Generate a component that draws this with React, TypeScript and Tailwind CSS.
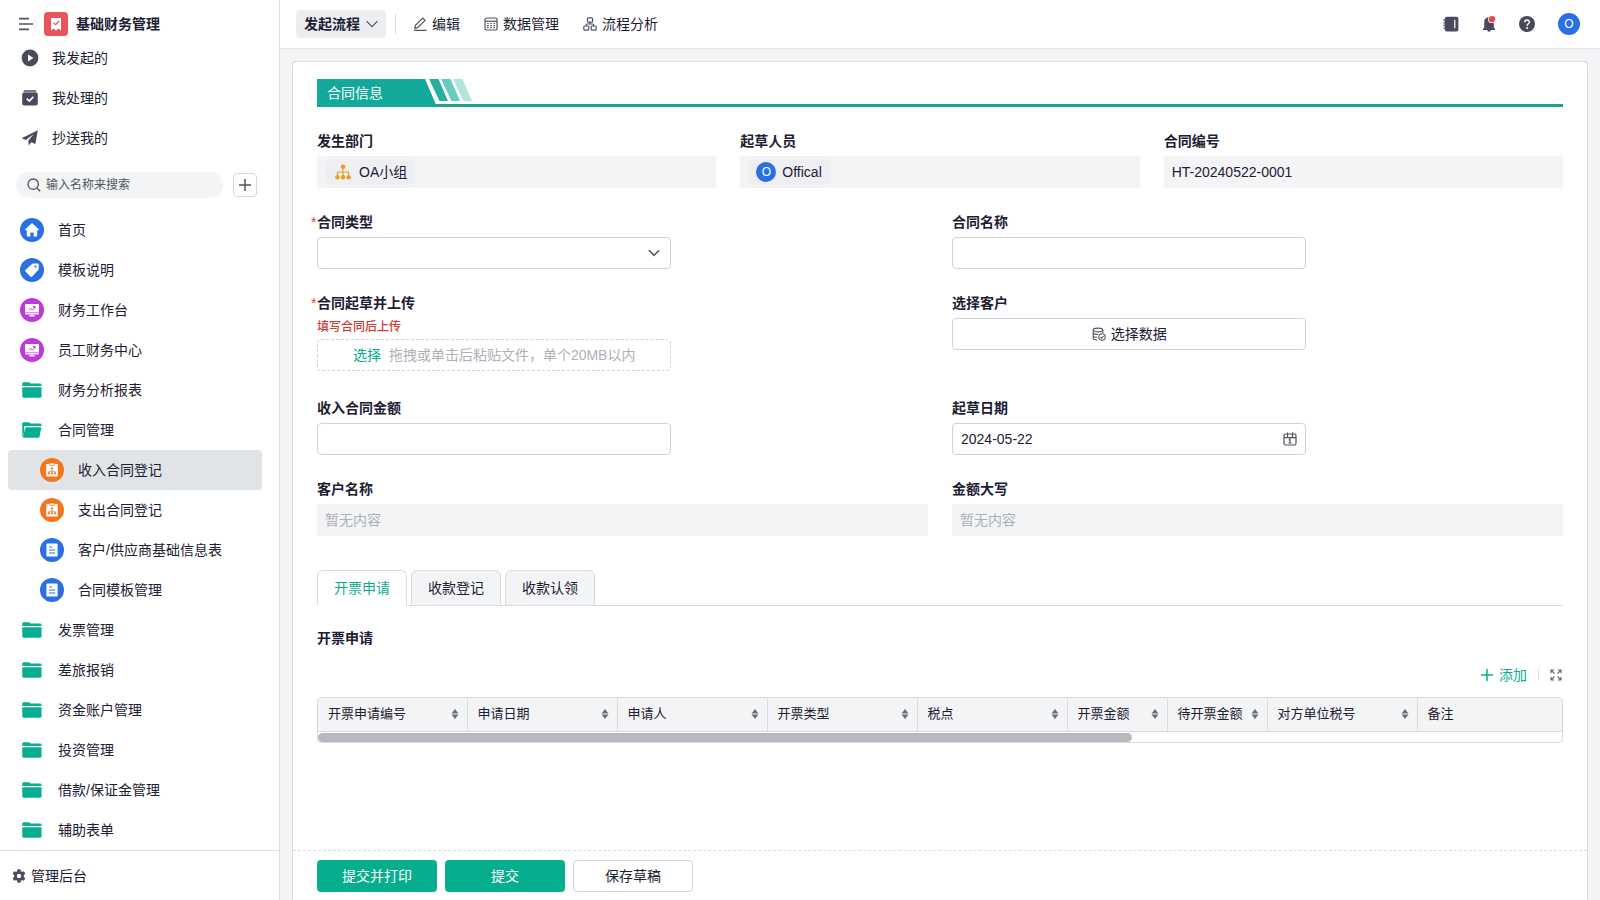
import { useState } from 'react';
import type { ReactNode } from 'react';

const topLinks = [
  { icon: 'play', label: '我发起的' },
  { icon: 'done', label: '我处理的' },
  { icon: 'send', label: '抄送我的' }
];

const menuItems = [
  { icon: 'home', label: '首页' },
  { icon: 'tag', label: '模板说明' },
  { icon: 'board', label: '财务工作台' },
  { icon: 'board', label: '员工财务中心' },
  { icon: 'folder', label: '财务分析报表' },
  { icon: 'folderOpen', label: '合同管理' },
  { icon: 'flow', label: '收入合同登记', child: true, active: true },
  { icon: 'flow', label: '支出合同登记', child: true },
  { icon: 'doc', label: '客户/供应商基础信息表', child: true },
  { icon: 'doc', label: '合同模板管理', child: true },
  { icon: 'folder', label: '发票管理' },
  { icon: 'folder', label: '差旅报销' },
  { icon: 'folder', label: '资金账户管理' },
  { icon: 'folder', label: '投资管理' },
  { icon: 'folder', label: '借款/保证金管理' },
  { icon: 'folder', label: '辅助表单' }
];

const columns = [
  { label: '开票申请编号', width: 'w-[149px]' },
  { label: '申请日期', width: 'w-[150px]' },
  { label: '申请人', width: 'w-[150px]' },
  { label: '开票类型', width: 'w-[150px]' },
  { label: '税点', width: 'w-[150px]' },
  { label: '开票金额', width: 'w-[100px]' },
  { label: '待开票金额', width: 'w-[100px]' },
  { label: '对方单位税号', width: 'w-[150px]' },
  { label: '备注', width: '' }
];

const tabs = ['开票申请', '收款登记', '收款认领'];

function TopLinkIcon({ name }: { name: string }) {
  return (
    <svg viewBox="0 0 18 18" className="h-[18px] w-[18px] shrink-0" fill="#474b5c">
      {name === 'play' && (
        <>
          <circle cx="9" cy="9" r="8.4" />
          <path d="M7 5.4v7.2L12.4 9z" fill="#fff" />
        </>
      )}
      {name === 'done' && (
        <>
          <path d="M4 1h10a1.500 1.500 0 0 1 1.500 1.500V3.200h-13V2.500A1.500 1.500 0 0 1 4 1z" opacity=".75" />
          <rect x="1.200" y="3.600" width="15.600" height="13" rx="2" />
          <path d="M5.800 9.600l2.500 2.500 4-4.200" fill="none" stroke="#fff" strokeWidth="1.700" />
        </>
      )}
      {name === 'send' && <path d="M16.8 1.2L.6 9.2l4.2 1.7 8-6-5.6 6.8.7 4.8 2.2-3.2 4.3 1.7z" />}
    </svg>
  );
}

function MenuIcon({ name }: { name: string }) {
  if (name === 'folder' || name === 'folderOpen') {
    return (
      <svg viewBox="0 0 24 24" className="h-6 w-6 shrink-0" fill="#07ae8e">
        <path d="M2.300 8V5.600c0-.8.600-1.400 1.400-1.400h5.400l1.600 1.400h9.200c.9 0 1.600.6 1.600 1.400v1z" />
        {name === 'folder' ? (
          <path d="M2.300 9.200h19.200v9c0 .9-.6 1.500-1.400 1.500H3.700c-.8 0-1.400-.6-1.400-1.500z" />
        ) : (
          <>
            <path d="M2.300 7h2v6l-1.400 5.400h-.6z" />
            <path d="M5.700 9.200h15.700L19.600 18.500c-.2.800-.7 1.200-1.500 1.200H4.200c-.9 0-1.400-.6-1.200-1.500z" />
          </>
        )}
      </svg>
    );
  }
  return (
    <svg viewBox="0 0 24 24" className="h-6 w-6 shrink-0">
      {name === 'home' && (
        <>
          <circle cx="12" cy="12" r="12" fill="#2a6fe4" />
          <path
            d="M12 5l7 6.500-.8 1-1-.7v5.700c0 .5-.4 1-1 1h-2.600v-4h-3.200v4H7.800c-.6 0-1-.5-1-1v-5.700l-1 .7-.8-1z"
            fill="#fff"
          />
        </>
      )}
      {name === 'tag' && (
        <>
          <circle cx="12" cy="12" r="12" fill="#2a6fe4" />
          <path
            d="M12.600 5.400h5.200c.5 0 .9.400.9.900v5.200l-6.700 7.200c-.5.400-1 .4-1.400 0l-5.200-5.200c-.4-.4-.4-.9 0-1.400z"
            fill="#fff"
          />
          <circle cx="15.500" cy="8.600" r="1.100" fill="#2a6fe4" />
        </>
      )}
      {name === 'board' && (
        <>
          <circle cx="12" cy="12" r="12" fill="#b93bd8" />
          <rect x="5" y="6" width="14" height="10.600" rx="1" fill="#fff" />
          <path d="M5 14.800h14" stroke="#b93bd8" strokeWidth=".7" />
          <path d="M10.800 16.400h2.400v1.200H15v1H9v-1h1.800z" fill="#fff" />
          <path d="M8.600 12.400l1.800-2 1.800 1.400 2.800-3M12.800 8.600h2.300v2.100" fill="none" stroke="#b93bd8" strokeWidth="1" />
        </>
      )}
      {name === 'flow' && (
        <>
          <circle cx="12" cy="12" r="12" fill="#f5761a" />
          <rect x="6.200" y="6" width="11.600" height="12.600" rx="1" fill="#fff" />
          <rect x="9.400" y="5" width="5.200" height="2.600" rx=".8" fill="#fff" stroke="#f5761a" strokeWidth=".7" />
          <path d="M12 10.500v4M8.900 15.200v-1.900h6.200v1.900" fill="none" stroke="#f5761a" strokeWidth=".7" />
          <path d="M11 9.400h2v1.900h-2zM8 14.600h2v1.700H8zM11 14.600h2v1.700h-2zM14 14.600h2v1.700h-2z" fill="#f5761a" />
        </>
      )}
      {name === 'doc' && (
        <>
          <circle cx="12" cy="12" r="12" fill="#2a6fe4" />
          <rect x="6.400" y="5.400" width="11.200" height="13" rx="1" fill="#fff" />
          <path d="M9 9h3M9 12h6.200M9 15h6.200" stroke="#2a6fe4" strokeWidth="1.100" />
        </>
      )}
    </svg>
  );
}

function Sidebar() {
  return (
    <aside className="flex w-[280px] shrink-0 flex-col border-r border-[#dcdee3] bg-white">
      <div className="flex items-center gap-2 pt-3 pb-0.5 pl-[18px]">
        <button aria-label="收起菜单">
          <svg viewBox="0 0 18 16" className="h-4 w-[18px]" stroke="#50545f" strokeWidth="1.600">
            <path d="M1 2.600h10M1 8h14M1 13.400h10" />
          </svg>
        </button>
        <svg viewBox="0 0 24 24" className="h-6 w-6">
          <rect width="24" height="24" rx="4" fill="#e9565a" />
          <path d="M7 6h10v12.400L14.500 16.400 12 18.400 9.500 16.400 7 18.400z" fill="#fff" />
          <path d="M9.400 10.600l2.200 2 3.600-3.600" fill="none" stroke="#e9565a" strokeWidth="1.200" />
        </svg>
        <h1 className="text-sm font-bold">基础财务管理</h1>
      </div>

      <nav>
        {topLinks.map((item) => (
          <a key={item.label} href="#" className="flex h-10 items-center gap-[13px] pl-[21px]">
            <TopLinkIcon name={item.icon} />
            {item.label}
          </a>
        ))}
      </nav>

      <div className="mt-0.5 flex items-center gap-2.5 py-3 pr-[22px] pl-4">
        <label className="flex h-[26px] min-w-0 flex-1 items-center gap-[5px] rounded-full bg-[#f2f4f5] pl-[11px]">
          <svg viewBox="0 0 14 14" className="h-3.5 w-3.5 shrink-0" fill="none" stroke="#50545f" strokeWidth="1.300">
            <circle cx="6.200" cy="6.200" r="5.200" />
            <path d="M10 10l3.200 3.200" />
          </svg>
          <input
            type="text"
            aria-label="搜索"
            placeholder="输入名称来搜索"
            className="min-w-0 flex-1 bg-transparent text-xs outline-none placeholder:text-[#50545f]"
          />
        </label>
        <button aria-label="新建" className="flex h-6 w-6 items-center justify-center rounded border border-[#d2d5da]">
          <svg viewBox="0 0 12 12" className="h-3 w-3" stroke="#50545f" strokeWidth="1.500">
            <path d="M6 0v12M0 6h12" />
          </svg>
        </button>
      </div>

      <nav className="flex-1 pr-[17px] pl-2">
        {menuItems.map((item) => (
          <a
            key={item.label}
            href="#"
            className={`flex h-10 items-center gap-3.5 rounded ${item.child ? 'pl-8' : 'pl-3'} ${
              item.active ? 'bg-[#e1e4e7]' : ''
            }`}
          >
            <MenuIcon name={item.icon} />
            {item.label}
          </a>
        ))}
      </nav>

      <a href="#" className="flex h-[50px] items-center gap-[5px] border-t border-[#dfe1e5] pl-3">
        <svg viewBox="0 0 14 14" className="h-3.5 w-3.5" fill="#474b5c">
          <path
            fillRule="evenodd"
            d="M5.600.3h2.800l.4 1.900 1.200.7 1.900-.6 1.400 2.400-1.500 1.400v1.800l1.500 1.400-1.400 2.400-1.900-.6-1.200.7-.4 1.900H5.600l-.4-1.900-1.200-.7-1.900.6L.7 9.300l1.500-1.400V6.100L.7 4.700l1.400-2.400 1.900.6 1.200-.7zM7 4.800a2.200 2.200 0 1 0 0 4.400 2.200 2.200 0 0 0 0-4.400z"
          />
        </svg>
        管理后台
      </a>
    </aside>
  );
}

function TopBar() {
  return (
    <header className="flex h-[49px] shrink-0 items-center border-b border-[#e4e6e9] bg-white pr-5 pl-4">
      <button className="flex h-7 items-center gap-1.5 rounded bg-[#ebedf0] px-2 font-bold">
        发起流程
        <svg viewBox="0 0 12 8" className="h-2 w-3" fill="none" stroke="#50545f" strokeWidth="1.200">
          <path d="M.5 1.200L6 6.700l5.500-5.500" />
        </svg>
      </button>
      <div className="mr-[17px] ml-[9px] h-5 w-px bg-[#d5d8dc]" />
      <div className="flex gap-6">
        <button className="flex items-center gap-[5px]">
          <svg viewBox="0 0 14 14" className="h-3.5 w-3.5" fill="none" stroke="#50545f" strokeWidth="1.200">
            <path d="M1 13.300h12.500M2.400 8.300L9.700 1l2.300 2.300-7.300 7.300-2.900.6z" />
          </svg>
          编辑
        </button>
        <button className="flex items-center gap-[5px]">
          <svg viewBox="0 0 14 14" className="h-3.5 w-3.5" fill="none" stroke="#50545f" strokeWidth="1.200">
            <rect x="1" y="1" width="12" height="12" rx="1.500" />
            <path d="M1 4.300h12" />
            <path d="M3.100 6.500h1.600M6.200 6.500h1.600M9.300 6.500h1.600M3.100 8.600h1.600M6.200 8.600h1.600M9.300 8.600h1.600M3.100 10.700h1.600M6.200 10.700h1.600M9.300 10.700h1.600" />
          </svg>
          数据管理
        </button>
        <button className="flex items-center gap-[5px]">
          <svg viewBox="0 0 14 14" className="h-3.5 w-3.5" fill="none" stroke="#50545f" strokeWidth="1.200">
            <rect x="4.400" y=".8" width="5.200" height="4.400" rx="1" />
            <rect x=".8" y="9" width="5" height="4.200" rx="1" />
            <rect x="8.200" y="9" width="5" height="4.200" rx="1" />
            <path d="M7 5.200V7M3.300 9V8c0-.6.400-1 1-1h5.400c.6 0 1 .4 1 1v1" />
          </svg>
          流程分析
        </button>
      </div>

      <div className="ml-auto flex items-center gap-[22px]">
        <button aria-label="通讯录">
          <svg viewBox="0 0 16 16" className="h-4 w-4" fill="#474b5c">
            <rect x="1.800" y=".8" width="13.600" height="14.600" rx="2" />
            <path d="M.4 4.200h3M.4 6.800h3M.4 9.400h3M.4 12h3" stroke="#474b5c" strokeWidth="1.200" />
            <path d="M11.800 3.800v8.400" stroke="#fff" strokeWidth="1.200" />
          </svg>
        </button>
        <button aria-label="消息">
          <svg viewBox="0 0 16 16" className="h-4 w-4" fill="#474b5c">
            <path d="M8 1.200c3 0 4.800 2.200 4.800 5v5.200L14 13v1H9.800a1.800 1.800 0 0 1-3.600 0H2v-1l1.200-1.600V6.200c0-2.800 1.800-5 4.800-5z" />
            <circle cx="11" cy="3.200" r="3.900" fill="#fff" />
            <circle cx="11" cy="3.200" r="3.100" fill="#ea4448" />
          </svg>
        </button>
        <button aria-label="帮助">
          <svg viewBox="0 0 16 16" className="h-4 w-4">
            <circle cx="8" cy="8" r="8" fill="#474b5c" />
            <path d="M5.700 6.300c0-3 4.700-3 4.700-.2 0 1.600-2.300 1.700-2.300 3.600" fill="none" stroke="#fff" strokeWidth="1.500" />
            <circle cx="8.100" cy="12" r="1" fill="#fff" />
          </svg>
        </button>
        <button className="ml-px flex h-[22px] w-[22px] items-center justify-center rounded-full bg-[#2a6fe4] text-xs text-white">
          O
        </button>
      </div>
    </header>
  );
}

function Field({ label, id, required, children }: { label: string; id: string; required?: boolean; children: ReactNode }) {
  return (
    <div>
      <label htmlFor={id} className="relative block leading-[30px] font-bold">
        {required && <span className="absolute -left-1.5 font-normal text-[#dc3b3b]">*</span>}
        {label}
      </label>
      {children}
    </div>
  );
}

const inputClass = 'block h-8 w-[58%] rounded border border-[#cfd3d8] bg-white px-2 outline-none';
const readonlyClass = 'block h-8 w-full bg-[#f3f4f6] px-2 outline-none placeholder:text-[#adb0b8]';

function ContractForm() {
  const [type, setType] = useState('');

  return (
    <div className="space-y-[19px]">
      <div className="grid grid-cols-3 gap-6">
        <Field label="发生部门" id="dept">
          <div id="dept" className="flex h-8 items-center bg-[#f3f4f6] px-2">
            <span className="flex h-[26px] items-center gap-2 rounded bg-[#eeeff2] pr-2 pl-2.5">
              <svg viewBox="0 0 16 16" className="h-4 w-4" fill="#e6a11c">
                <path d="M8 3v10M2.500 12V8h11v4" fill="none" stroke="#e6a11c" strokeWidth="1.200" />
                <circle cx="8" cy="2.800" r="2.300" />
                <circle cx="2.400" cy="13.200" r="2.200" />
                <circle cx="8" cy="13.200" r="2.200" />
                <circle cx="13.600" cy="13.200" r="2.200" />
              </svg>
              OA小组
            </span>
          </div>
        </Field>
        <Field label="起草人员" id="drafter">
          <div id="drafter" className="flex h-8 items-center bg-[#f3f4f6] px-2">
            <span className="flex h-[26px] items-center gap-1.5 rounded bg-[#eeeff2] px-2">
              <span className="flex h-5 w-5 items-center justify-center rounded-full bg-[#2a6fe4] text-xs text-white">O</span>
              Offical
            </span>
          </div>
        </Field>
        <Field label="合同编号" id="code">
          <input id="code" readOnly value="HT-20240522-0001" className={readonlyClass} />
        </Field>
      </div>

      <div className="grid grid-cols-2 gap-x-6 gap-y-[19px]">
        <Field label="合同类型" id="type" required>
          <div className="relative w-[58%]">
            <select
              id="type"
              value={type}
              onChange={(e) => setType(e.target.value)}
              className="block h-8 w-full appearance-none rounded border border-[#cfd3d8] bg-white px-2 outline-none"
            >
              <option value=""></option>
            </select>
            <svg
              viewBox="0 0 12 8"
              className="pointer-events-none absolute top-3 right-[11px] h-2 w-3"
              fill="none"
              stroke="#50545f"
              strokeWidth="1.500"
            >
              <path d="M.8 1.200L6 6.400l5.200-5.200" />
            </svg>
          </div>
        </Field>
        <Field label="合同名称" id="name">
          <input id="name" type="text" className={inputClass} />
        </Field>

        <Field label="合同起草并上传" id="file" required>
          <p className="mb-0.5 text-xs leading-[19px] font-medium text-[#cf3a35]">填写合同后上传</p>
          <button
            id="file"
            className="mb-[3px] flex h-8 w-[58%] items-center justify-center gap-2 rounded border border-dashed border-[#cfd3d8]"
          >
            <span className="text-[#07ae8e]">选择</span>
            <span className="text-[#adb0b8]">拖拽或单击后粘贴文件，单个20MB以内</span>
          </button>
        </Field>
        <Field label="选择客户" id="customer">
          <button
            id="customer"
            className="flex h-8 w-[58%] items-center justify-center gap-[5px] rounded border border-[#cfd3d8] bg-white"
          >
            <svg viewBox="0 0 14 14" className="h-3.5 w-3.5" fill="none" stroke="#50545f" strokeWidth="1.100">
              <ellipse cx="6" cy="3" rx="4.800" ry="1.900" />
              <path d="M1.200 3v8.200c0 1 2 1.700 4 1.800M10.800 3v3M1.200 5.700c0 1.200 2.600 2 4.800 1.800M1.200 8.400c0 1.200 2 1.900 4 1.900" />
              <circle cx="10" cy="10" r="3.200" />
              <path d="M8.500 10.200l1.100 1 1.900-2.100" />
            </svg>
            选择数据
          </button>
        </Field>

        <Field label="收入合同金额" id="amount">
          <input id="amount" type="text" className={inputClass} />
        </Field>
        <Field label="起草日期" id="date">
          <div className="flex h-8 w-[58%] items-center rounded border border-[#cfd3d8] bg-white px-2">
            <input id="date" type="text" defaultValue="2024-05-22" className="min-w-0 flex-1 outline-none" />
            <svg viewBox="0 0 14 14" className="h-3.5 w-3.5" fill="none" stroke="#50545f" strokeWidth="1.200">
              <rect x="1" y="2" width="12" height="11" rx="1.500" />
              <path d="M1 5.600h12M4.500.5v5M9.500.5v5M7 5.600v5.600M5.700 7.800H7M5.400 11h3.200" />
            </svg>
          </div>
        </Field>

        <Field label="客户名称" id="customerName">
          <input id="customerName" readOnly placeholder="暂无内容" className={readonlyClass} />
        </Field>
        <Field label="金额大写" id="amountText">
          <input id="amountText" readOnly placeholder="暂无内容" className={readonlyClass} />
        </Field>
      </div>
    </div>
  );
}

function InvoiceSection() {
  const [tab, setTab] = useState(tabs[0]);

  return (
    <section className="mt-[34px]">
      <div className="flex gap-1 border-b border-[#d9dbdf]">
        {tabs.map((t) => (
          <button
            key={t}
            onClick={() => setTab(t)}
            className={`-mb-px h-9 rounded-t-md border px-4 ${
              t === tab ? 'border-[#d9dbdf] border-b-white bg-white text-[#07ae8e]' : 'border-[#d9dbdf] bg-[#f3f4f6]'
            }`}
          >
            {t}
          </button>
        ))}
      </div>

      <h2 className="mt-[22px] font-bold">开票申请</h2>

      <div className="mt-[17px] flex items-center justify-end pr-px">
        <button className="flex items-center gap-1.5 text-[#07ae8e]">
          <svg viewBox="0 0 12 12" className="h-3 w-3" stroke="#07ae8e" strokeWidth="1.500">
            <path d="M6 0v12M0 6h12" />
          </svg>
          添加
        </button>
        <div className="mx-[11px] h-3 w-px bg-[#dfe1e5]" />
        <button aria-label="全屏">
          <svg viewBox="0 0 12 12" className="h-3 w-3" fill="none" stroke="#6b6f78" strokeWidth="1.200">
            <path d="M1 4.200V1h3.200M7.800 1H11v3.200M11 7.800V11H7.800M4.200 11H1V7.800M1 1l3.500 3.500M11 1L7.500 4.500M11 11L7.500 7.500M1 11l3.500-3.500" />
          </svg>
        </button>
      </div>

      <div className="mt-3 overflow-hidden rounded border border-[#d9dbdf]">
        <table className="w-full table-fixed text-[13px]">
          <thead className="bg-[#f3f4f6]">
            <tr className="h-[33px] border-b border-[#d9dbdf]">
              {columns.map((col) => (
                <th key={col.label} className={`border-r border-[#d9dbdf] pr-2 pl-2.5 font-normal last:border-r-0 ${col.width}`}>
                  <div className="flex items-center justify-between whitespace-nowrap">
                    {col.label}
                    {col.width && (
                      <svg viewBox="0 0 8 10" className="h-2.5 w-2 shrink-0" fill="#6b6f78">
                        <path d="M4 0l3.500 4.500h-7zM4 10L.5 5.500h7z" />
                      </svg>
                    )}
                  </div>
                </th>
              ))}
            </tr>
          </thead>
        </table>
        <div className="pt-px">
          <div className="h-[9px] w-[65.4%] rounded-full bg-[#b7b9bf]" />
        </div>
      </div>
    </section>
  );
}

export default function App() {
  return (
    <div className="flex min-h-screen bg-[#f3f4f6] font-['Liberation_Sans','Noto_Sans_CJK_SC',sans-serif] text-sm text-[#1c2033]">
      <Sidebar />
      <div className="flex min-w-0 flex-1 flex-col">
        <TopBar />
        <main className="mx-3 mt-3 flex flex-1 flex-col rounded-t border border-b-0 border-[#d9dbdf] bg-white">
          <div className="flex-1 px-6 pt-[17px]">
            <div className="mb-[19px] flex h-7 items-start border-b-[3px] border-[#20a293]">
              <div className="flex h-7 w-[120px] shrink-0 items-center bg-[#12a99a] pl-2.5 text-white [clip-path:polygon(0_0,108px_0,120px_100%,0_100%)]">
                合同信息
              </div>
              <svg viewBox="0 0 44 22" className="-ml-2 h-[22px] w-11">
                <path d="M0 0h9.500l9.500 22h-8.500z" fill="#28ae9d" />
                <path d="M12 0h9.500l9.500 22h-8.500z" fill="#66ccc2" />
                <path d="M24 0h9.500l9.500 22h-8.500z" fill="#b1e6dd" />
              </svg>
            </div>
            <ContractForm />
            <InvoiceSection />
          </div>

          <footer className="flex h-[50px] gap-2 border-t border-dashed border-[#d9dbdf] px-6 pt-[9px]">
            <button className="h-8 w-[120px] rounded bg-[#07ae8e] text-white">提交并打印</button>
            <button className="h-8 w-[120px] rounded bg-[#07ae8e] text-white">提交</button>
            <button className="h-8 w-[120px] rounded border border-[#cfd3d8] bg-white">保存草稿</button>
          </footer>
        </main>
      </div>
    </div>
  );
}
